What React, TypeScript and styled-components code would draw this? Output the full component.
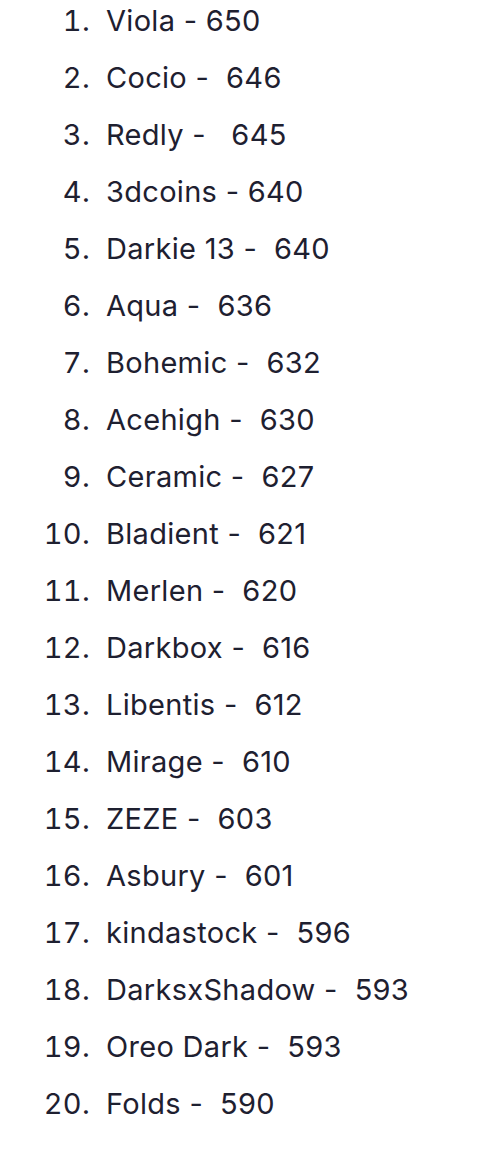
import {createGlobalStyle, styled} from "styled-components";

const GlobalStyle = createGlobalStyle`
    html, body {
        margin: 0;
        padding: 0;
        background: #ffffff;
    }
`

type Entry = {
    name: string
    score: string
}

const entries: Entry[] = [
    {name: 'Viola - ', score: '650'},
    {name: 'Cocio -  ', score: '646'},
    {name: 'Redly -   ', score: '645'},
    {name: '3dcoins - ', score: '640'},
    {name: 'Darkie 13 -  ', score: '640'},
    {name: 'Aqua -  ', score: '636'},
    {name: 'Bohemic -  ', score: '632'},
    {name: 'Acehigh -  ', score: '630'},
    {name: 'Ceramic -  ', score: '627'},
    {name: 'Bladient -  ', score: '621'},
    {name: 'Merlen -  ', score: '620'},
    {name: 'Darkbox -  ', score: '616'},
    {name: 'Libentis -  ', score: '612'},
    {name: 'Mirage -  ', score: '610'},
    {name: 'ZEZE -  ', score: '603'},
    {name: 'Asbury -  ', score: '601'},
    {name: 'kindastock -  ', score: '596'},
    {name: 'DarksxShadow -  ', score: '593'},
    {name: 'Oreo Dark -  ', score: '593'},
    {name: 'Folds -  ', score: '590'},
]

const Board = styled.ol`
    list-style: none;
    margin: 0;
    padding: 0 0 28px 0;
    font-family: Inter, "Liberation Sans", sans-serif;
    font-size: 29px;
    line-height: 41px;
    color: #1e2030;
    letter-spacing: 0.3px;
`

const Row = styled.li`
    display: flex;
    align-items: baseline;
    margin-bottom: 16px;
`

const Rank = styled.span`
    width: 90px;
    text-align: right;
    flex-shrink: 0;
    font-variant-numeric: tabular-nums;
`

const Name = styled.span`
    margin-left: 16px;
    white-space: pre;
`

export default function App() {
    return (
        <>
            <GlobalStyle/>
            <Board>
                {
                    entries.map((entry, i) =>
                        <Row key={i}>
                            <Rank>{i + 1}.</Rank>
                            <Name>{entry.name}{entry.score}</Name>
                        </Row>
                    )
                }
            </Board>
        </>
    )
}
